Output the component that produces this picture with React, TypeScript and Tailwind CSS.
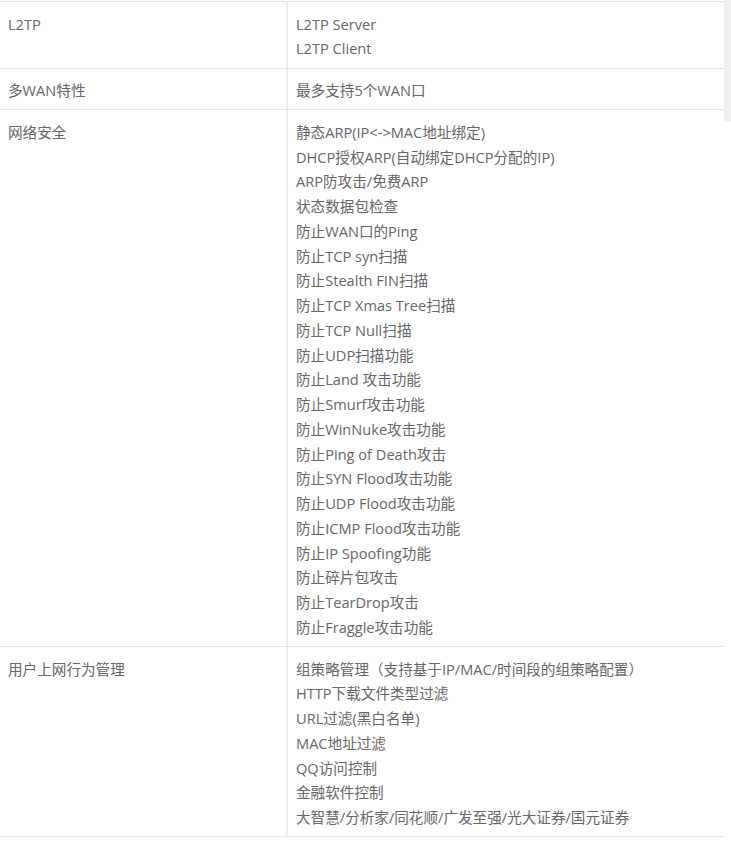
import React from 'react';

const ROWS: { name: string; items: string[] }[] = [
  { name: 'L2TP', items: ['L2TP Server', 'L2TP Client'] },
  { name: '多WAN特性', items: ['最多支持5个WAN口'] },
  {
    name: '网络安全',
    items: [
      '静态ARP(IP<->MAC地址绑定)',
      'DHCP授权ARP(自动绑定DHCP分配的IP)',
      'ARP防攻击/免费ARP',
      '状态数据包检查',
      '防止WAN口的Ping',
      '防止TCP syn扫描',
      '防止Stealth FIN扫描',
      '防止TCP Xmas Tree扫描',
      '防止TCP Null扫描',
      '防止UDP扫描功能',
      '防止Land 攻击功能',
      '防止Smurf攻击功能',
      '防止WinNuke攻击功能',
      '防止Ping of Death攻击',
      '防止SYN Flood攻击功能',
      '防止UDP Flood攻击功能',
      '防止ICMP Flood攻击功能',
      '防止IP Spoofing功能',
      '防止碎片包攻击',
      '防止TearDrop攻击',
      '防止Fraggle攻击功能',
    ],
  },
  {
    name: '用户上网行为管理',
    items: [
      '组策略管理（支持基于IP/MAC/时间段的组策略配置）',
      'HTTP下载文件类型过滤',
      'URL过滤(黑白名单)',
      'MAC地址过滤',
      'QQ访问控制',
      '金融软件控制',
      '大智慧/分析家/同花顺/广发至强/光大证券/国元证券',
    ],
  },
];

export default function App() {
  return (
    <div
      className="relative w-[731px] h-[841px] overflow-hidden bg-white text-[14.6px] text-[#666]"
      style={{ fontFamily: '"Open Sans", "Noto Sans CJK SC", sans-serif' }}
    >
      {/* Scrollbar track */}
      <div className="absolute right-0 top-0 w-[7px] h-[122px] bg-[#f0f0f0]" />

      <div className="mt-px w-[724px] border-t border-[#e3e3e3]">
        {ROWS.map((row) => (
          <div key={row.name} className="flex border-b border-[#e3e3e3]">
            <div className="w-[288px] shrink-0 border-r-2 border-[#eee] pl-[8px] pr-[8px] pt-[9.5px] pb-[6.5px] leading-[24.75px]">
              {row.name}
            </div>
            <div className="flex-1 pl-[8px] pr-[8px] pt-[9.5px] pb-[6.5px] leading-[24.75px]">
              {row.items.map((item) => (
                <div key={item} className="whitespace-nowrap">
                  {item}
                </div>
              ))}
            </div>
          </div>
        ))}
      </div>
    </div>
  );
}
